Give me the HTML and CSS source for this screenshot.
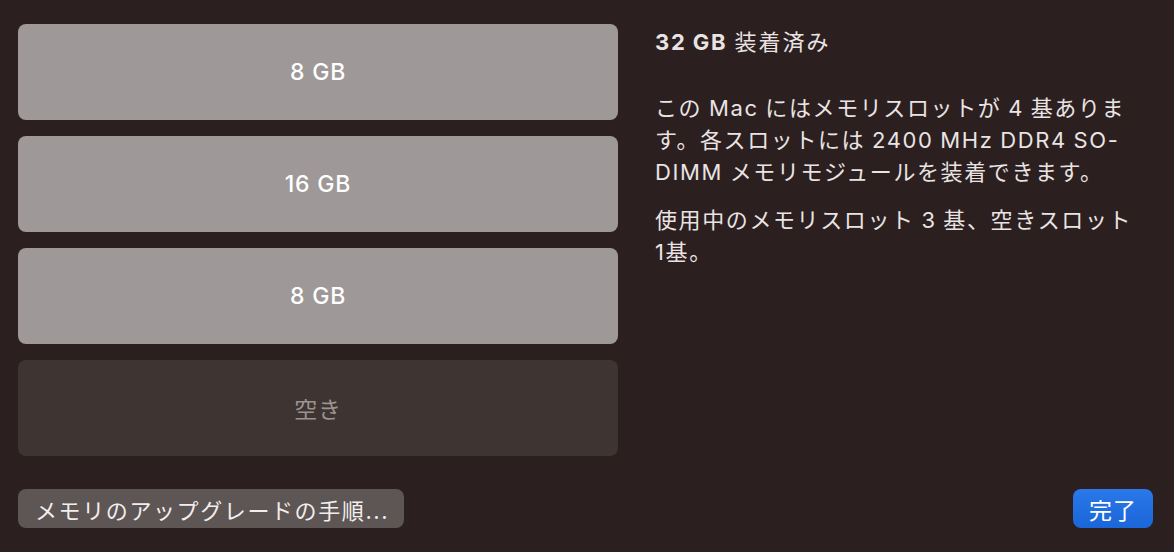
FILE: index.html
```html
<!DOCTYPE html>
<html lang="ja">
<head>
  <meta charset="UTF-8">
  <meta name="viewport" content="width=device-width, initial-scale=1.0">
  <title>メモリ</title>
  <link rel="stylesheet" href="styles.css">
</head>
<body>

  <div class="window">
    <div class="main">
      <div class="slots">
        <div class="slot">8 GB</div>
        <div class="slot">16 GB</div>
        <div class="slot">8 GB</div>
        <div class="slot empty">空き</div>
      </div>

      <div class="info">
        <div class="title"><b>32 GB</b> 装着済み</div>
        <p>この Mac にはメモリスロットが 4 基ありま<br>す。各スロットには 2400 MHz DDR4 SO-<br>DIMM メモリモジュールを装着できます。</p>
        <p>使用中のメモリスロット 3 基、空きスロット<br>1基。</p>
      </div>
    </div>

    <div class="footer">
      <button class="btn">メモリのアップグレードの手順...</button>
      <button class="btn primary">完了</button>
    </div>
  </div>

</body>
</html>
```

FILE: styles.css
```css
body {
  font-family: Inter, "Noto Sans CJK JP", sans-serif;
  background-color: #2b1f1f;
  color: #e9e4e3;
  margin: 0;
}

.window {
  padding: 24px 21px 0 18px;
}

.main {
  display: flex;
  gap: 37px;
}

.slots {
  width: 600px;
  display: flex;
  flex-direction: column;
  gap: 16px;
}

.slot {
  height: 96px;
  border-radius: 8px;
  background: #9e9998;
  color: #ffffff;
  font-size: 23px;
  font-weight: 500;
  letter-spacing: 0.8px;
  display: flex;
  align-items: center;
  justify-content: center;
}

.slot.empty {
  background: #3e3432;
  color: #9c9391;
  font-weight: 400;
}

.info {
  padding-top: 2px;
  font-size: 22px;
  line-height: 32px;
  letter-spacing: 1.6px;
  word-spacing: -1px;
}

.title {
  margin-bottom: 34px;
  letter-spacing: 2px;
}

.title b {
  font-weight: 700;
  letter-spacing: 1.8px;
}

.info p {
  margin: 0 0 16px;
}

.footer {
  display: flex;
  justify-content: space-between;
  margin-top: 33px;
}

.btn {
  font-family: Inter, "Noto Sans CJK JP", sans-serif;
  font-size: 22px;
  letter-spacing: 1.6px;
  height: 39px;
  padding: 0 15px 0 17px;
  border: none;
  border-radius: 8px;
  background: #5e5655;
  color: #f2eeed;
}

.btn.primary {
  width: 80px;
  padding: 0;
  font-size: 23px;
  letter-spacing: 1px;
  background: linear-gradient(#2a78ea, #1b66d8);
  color: #ffffff;
}
```
